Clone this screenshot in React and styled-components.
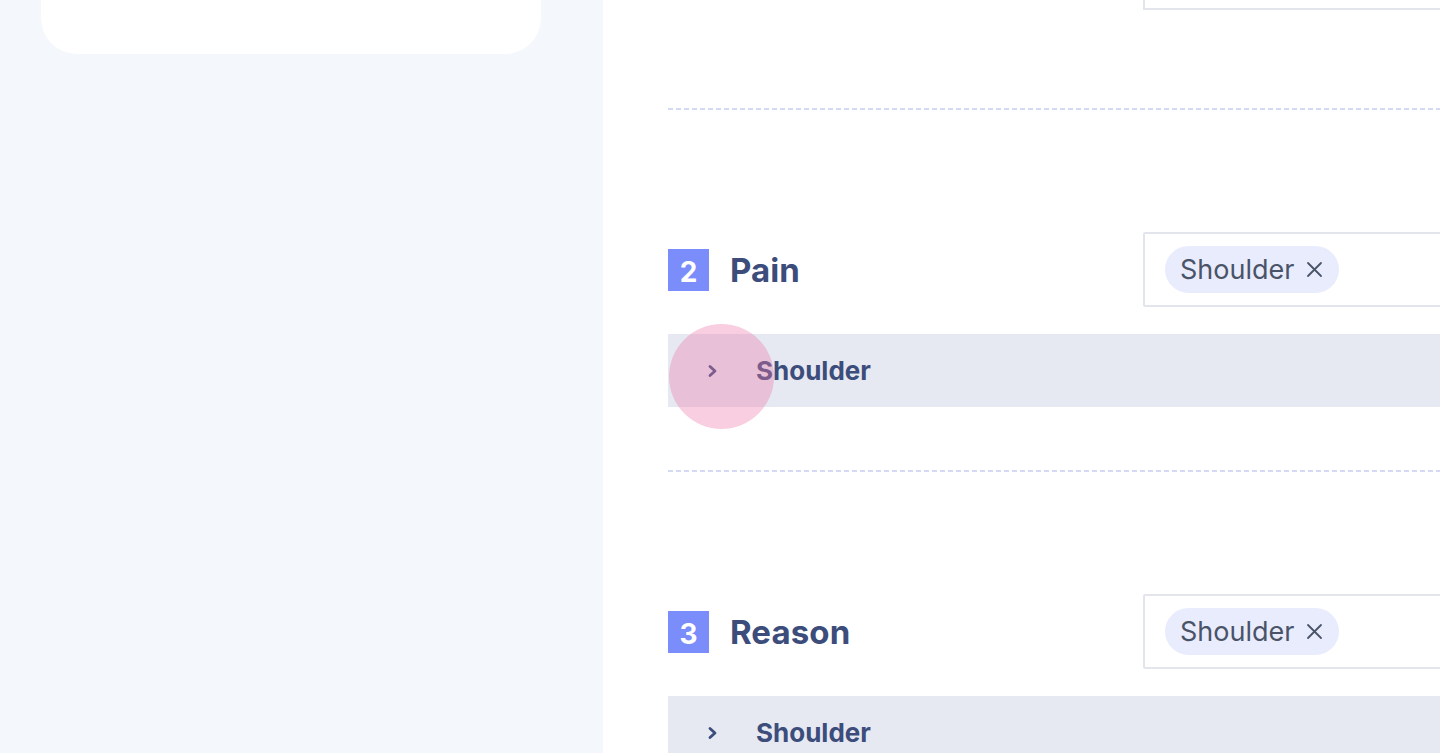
import React from "react";
import styled, { createGlobalStyle } from "styled-components";

const GlobalStyle = createGlobalStyle`
  html, body {
    margin: 0;
    padding: 0;
    overflow: hidden;
    background: #ffffff;
    font-family: "Inter", "Liberation Sans", sans-serif;
  }
`;

const Page = styled.div`
  display: flex;
  width: 1440px;
  height: 753px;
  overflow: hidden;
`;

const Sidebar = styled.aside`
  flex: 0 0 603px;
  background: #f4f7fc;
  padding: 0 62px 0 41px;
  box-sizing: border-box;
`;

const Card = styled.div`
  height: 54px;
  background: #ffffff;
  border-radius: 0 0 36px 36px;
`;

const Main = styled.main`
  flex: 1;
  position: relative;
  padding-left: 65px;
  overflow: hidden;
`;

const Content = styled.div`
  width: 1100px;
`;

const InputStub = styled.div`
  height: 10px;
  margin-left: 475px;
  border: 2px solid #e2e5eb;
  border-top: none;
  box-sizing: border-box;
`;

const Divider = styled.div`
  height: 2px;
  margin-top: ${(p) => p.$top}px;
  background: repeating-linear-gradient(
    90deg,
    #d4d9f5 0 5px,
    transparent 5px 8px
  );
`;

const Section = styled.section`
  padding: 122px 0 63px;
`;

const Header = styled.div`
  display: flex;
  align-items: center;
  height: 75px;
`;

const Badge = styled.div`
  width: 41px;
  height: 42px;
  display: flex;
  align-items: center;
  justify-content: center;
  background: #7b8cfb;
  color: #ffffff;
  font-size: 28px;
  font-weight: 700;
  padding-top: 5px;
  box-sizing: border-box;
`;

const Title = styled.h2`
  margin: 0 0 0 21px;
  flex: 1;
  color: #3c4d7b;
  font-size: 33px;
  font-weight: 700;
  letter-spacing: 0.1px;
`;

const TagInput = styled.div`
  width: 625px;
  height: 75px;
  display: flex;
  align-items: center;
  padding-left: 20px;
  border: 2px solid #e2e5eb;
  border-radius: 2px;
  box-sizing: border-box;
`;

const Chip = styled.span`
  display: inline-flex;
  align-items: center;
  gap: 12px;
  height: 47px;
  padding: 0 16px 0 15px;
  border-radius: 24px;
  background: #e9ecfd;
  color: #4a5468;
  font-size: 27px;
  font-weight: 400;
`;

const Row = styled.div`
  display: flex;
  align-items: center;
  height: 73px;
  margin-top: 27px;
  padding-left: 39px;
  background: #e6e9f2;
  color: #3c4d7b;
  font-size: 26px;
  font-weight: 700;
`;

const Chevron = styled.span`
  display: flex;
  width: 11px;
  margin-right: 38px;
`;

const Touch = styled.div`
  position: absolute;
  left: 66px;
  top: 324px;
  width: 105px;
  height: 105px;
  border-radius: 50%;
  background: rgba(236, 118, 170, 0.36);
  pointer-events: none;
`;

const CloseIcon = () => (
  <svg width="17" height="17" viewBox="0 0 17 17" fill="none">
    <path d="M2 2L15 15M15 2L2 15" stroke="#4a5468" strokeWidth="1.8" strokeLinecap="round" />
  </svg>
);

const ChevronIcon = () => (
  <svg width="11" height="14" viewBox="0 0 11 14" fill="none">
    <path d="M3 2.5L8 7L3 11.5" stroke="#3c4d7b" strokeWidth="2.8" strokeLinecap="round" strokeLinejoin="round" />
  </svg>
);

const sections = [
  { num: 2, title: "Pain", tag: "Shoulder" },
  { num: 3, title: "Reason", tag: "Shoulder" },
];

const App = () => {
  return (
    <>
      <GlobalStyle />
      <Page>
        <Sidebar>
          <Card />
        </Sidebar>
        <Main>
          <Content>
            <InputStub />
            <Divider $top={98} />
            {sections.map((s, i) => (
              <React.Fragment key={s.num}>
                <Section>
                  <Header>
                    <Badge>{s.num}</Badge>
                    <Title>{s.title}</Title>
                    <TagInput>
                      <Chip>
                        {s.tag}
                        <CloseIcon />
                      </Chip>
                    </TagInput>
                  </Header>
                  <Row>
                    <Chevron>
                      <ChevronIcon />
                    </Chevron>
                    {s.tag}
                  </Row>
                </Section>
                {i === 0 && <Divider $top={0} />}
              </React.Fragment>
            ))}
          </Content>
          <Touch />
        </Main>
      </Page>
    </>
  );
};

export default App;
